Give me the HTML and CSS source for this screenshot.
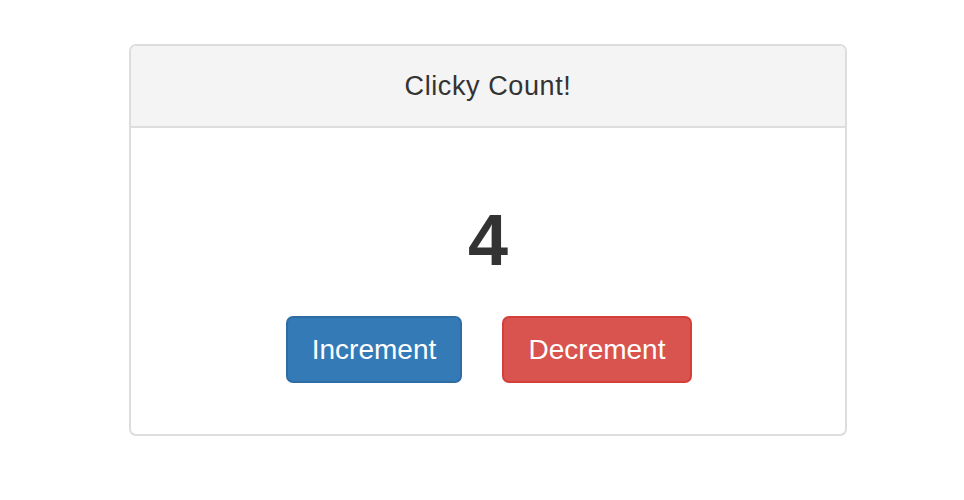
FILE: index.html
```html
<!DOCTYPE html>
<html>
<head>
<meta charset="utf-8">
<link rel="stylesheet" href="styles.css">
</head>
<body>
<div class="page">
  <div class="panel">
    <div class="panel-heading">Clicky Count!</div>
    <div class="panel-body">
      <div class="count">4</div>
      <div class="actions">
        <button class="btn btn-primary">Increment</button>
        <button class="btn btn-danger">Decrement</button>
      </div>
    </div>
  </div>
</div>
</body>
</html>
```
FILE: styles.css
```css
html, body {
  margin: 0;
  padding: 0;
  background: #fff;
  font-family: "Liberation Sans", Arial, sans-serif;
  color: #333;
}
.page {
  padding: 44px 0 0 129px;
}
.panel {
  width: 718px;
  box-sizing: border-box;
  border: 2px solid #ddd;
  border-radius: 7px;
  overflow: hidden;
}
.panel-heading {
  background: #f4f4f4;
  border-bottom: 2px solid #ddd;
  height: 82px;
  box-sizing: border-box;
  display: flex;
  align-items: center;
  justify-content: center;
  font-size: 27px;
  letter-spacing: 0.6px;
  padding-bottom: 0;
}
.panel-body {
  height: 306px;
  box-sizing: border-box;
  padding-top: 76px;
  display: flex;
  flex-direction: column;
  align-items: center;
}
.count {
  font-size: 72px;
  font-weight: bold;
  line-height: 72px;
  height: 72px;
}
.actions {
  display: flex;
  gap: 40px;
  margin-top: 40px;
  padding-left: 2px;
}
.btn {
  font-family: "Liberation Sans", Arial, sans-serif;
  font-size: 28px;
  color: #fff;
  height: 67px;
  border-radius: 7px;
  border: 2px solid;
  padding: 0 20px;
  box-sizing: border-box;
}
.btn-primary {
  background: #337ab7;
  border-color: #2e6da4;
  width: 176px;
}
.btn-danger {
  background: #d9534f;
  border-color: #d43f3a;
  width: 190px;
}
```
